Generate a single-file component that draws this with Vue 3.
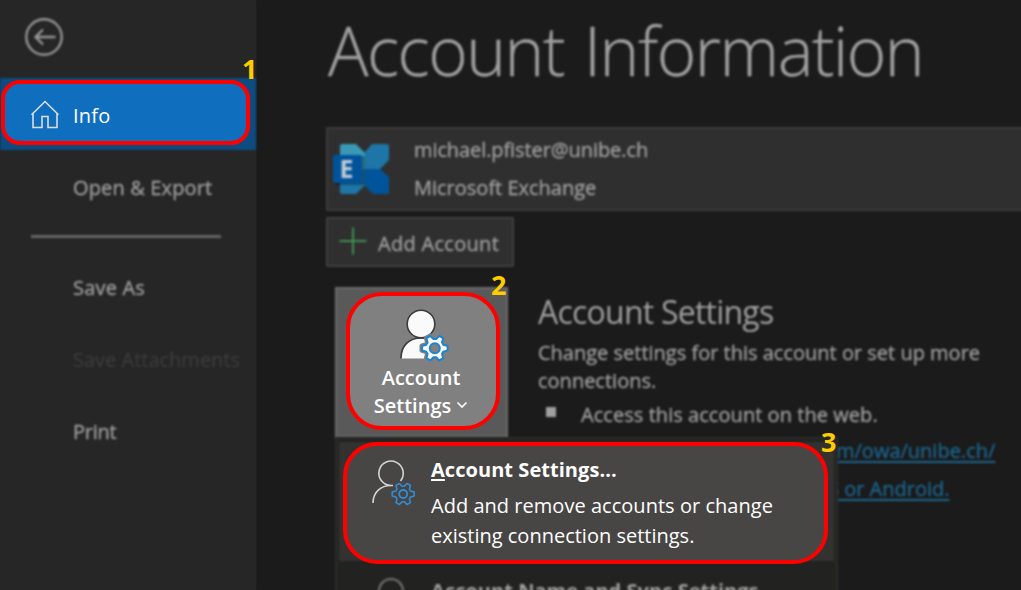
<script setup>
const navItems = [
  { label: 'Save As', cls: 'save-as' },
  { label: 'Save Attachments', cls: 'attachments' },
  { label: 'Print', cls: 'print' },
]
// Six-toothed gear outline centred on the origin.
const point = (radius, degrees) => {
  const a = (degrees * Math.PI) / 180
  return `${(radius * Math.cos(a)).toFixed(2)} ${(radius * Math.sin(a)).toFixed(2)}`
}
const gear =
  'M' +
  [0, 60, 120, 180, 240, 300]
    .flatMap((t) => [point(9.2, t - 22), point(13, t - 10), point(13, t + 10), point(9.2, t + 22)])
    .join('L') +
  'Z'
</script>

<template>
  <div class="page">
    <aside class="sidebar">
      <div class="back soft">
        <svg width="40" height="40" viewBox="0 0 40 40">
          <circle cx="20" cy="20" r="17.700" />
          <path d="M31.500 20H11.500M19 12.500L11.500 20L19 27.500" />
        </svg>
      </div>
      <div class="current soft"></div>
      <div class="nav soft"><span class="export">Open &amp; Export</span></div>
      <div class="divider soft"></div>
      <div v-for="n in navItems" :key="n.label" class="nav soft">
        <span :class="n.cls">{{ n.label }}</span>
      </div>
    </aside>

    <main class="content">
      <h1 class="soft"><span>Account Information</span></h1>
      <section class="account soft">
        <svg class="exchange" width="60" height="54" viewBox="0 0 60 54">
          <path fill="#3999b5" d="M10 2H24L34 12V27H8V4Q8 2 10 2Z" />
          <path fill="#1d76a7" d="M8 27H33V43L24 52H10Q8 52 8 50Z" />
          <path fill="#1d76a7" d="M40 2H55Q57 2 57 4V18L48 27H33V10Z" />
          <path fill="#00549b" d="M33 27H48L57 35V50Q57 52 55 52H41L33 44Z" />
          <rect x="3" y="14" width="30" height="29" fill="#000" opacity=".3" />
          <rect x="1" y="13" width="29" height="28" rx="2" fill="#00539b" />
          <text x="7.500" y="36">E</text>
        </svg>
        <div class="identity">
          <span class="mail">michael.pfister@unibe.ch</span>
          <span class="kind">Microsoft Exchange</span>
        </div>
      </section>
      <div class="add soft">
        <svg width="28" height="28" viewBox="0 0 28 28"><path d="M14 .5V27.500M.5 14H27.500" /></svg>
        <span>Add Account</span>
      </div>
      <section class="settings">
        <div class="tile soft"></div>
        <div class="about soft">
          <h2><span>Account Settings</span></h2>
          <p><span class="l1">Change settings for this account or set up more</span></p>
          <p><span class="l2">connections.</span></p>
          <div class="point"><i></i><span class="l3">Access this account on the web.</span></div>
          <div class="link link-a"><span>m/owa/unibe.ch/</span></div>
          <div class="link link-b"><span>S or Android.</span></div>
        </div>
      </section>
    </main>

    <div class="menu soft">
      <div class="hovered"></div>
      <div class="next">
        <svg width="30" height="20" viewBox="0 0 30 20"><circle cx="14" cy="14" r="12" /></svg>
        <span>Account Name and Sync Settings</span>
      </div>
    </div>

    <div class="callout c1">
      <svg width="30" height="30" viewBox="0 0 30 30">
        <path d="M1.500 14.800L15 1.500L28.500 14.800M3 13.500V27.500H12V16.500H18V27.500H27V13.500" />
      </svg>
      <span>Info</span>
    </div>
    <div class="callout c2">
      <svg class="person" width="52" height="54" viewBox="0 0 52 54">
        <path class="body" d="M2 50.500C2 37.500 10 30 22 30L30 32V50.500Z" />
        <path class="shoulder" d="M2 50.500C2 37.500 10 30 22 30H28" />
        <circle class="head" cx="22" cy="16" r="13.800" />
        <g transform="translate(35.800 40.200)">
          <path class="gap" :d="gear" />
          <path class="gear" :d="gear" />
          <circle class="hub" r="5" />
        </g>
      </svg>
      <span class="word1">Account</span>
      <div class="row">
        <span class="word2">Settings</span>
        <svg width="12" height="8" viewBox="0 0 12 8"><path d="M1.500 1.500L6 6L10.500 1.500" /></svg>
      </div>
    </div>
    <div class="callout c3">
      <svg class="person" width="46" height="48" viewBox="0 0 46 48">
        <path class="line" d="M2 43C2 32 10 25.500 20 25.500H22M29.500 21A12.200 12.200 0 1 0 20 25.500" />
        <g transform="translate(32.200 34)">
          <path class="gear" transform="scale(.86)" :d="gear" />
          <circle class="gear" r="4" />
        </g>
      </svg>
      <div class="copy">
        <strong><span><u>A</u>ccount Settings...</span></strong>
        <p><span class="d1">Add and remove accounts or change</span></p>
        <p><span class="d2">existing connection settings.</span></p>
      </div>
    </div>
    <b class="num n1">1</b>
    <b class="num n2">2</b>
    <b class="num n3">3</b>
  </div>
</template>

<style>
body { background: #1b1b1b; overflow: hidden; }
</style>

<style scoped>
* { box-sizing: border-box; margin: 0; }
svg { display: block; flex: none; overflow: visible; fill: none; }
span { white-space: nowrap; }
.page {
  position: relative; display: flex; width: 1021px; height: 590px; overflow: hidden;
  background: #1b1b1b; color: #a0a0a0; font: 20px/28px "Open Sans", "Noto Sans", sans-serif;
}
.soft { filter: blur(.9px); -webkit-text-stroke: .3px; }
.sidebar { width: 256px; flex: none; background: #262626; box-shadow: 0 0 2px #262626; }
.back { height: 78px; padding: 17px 0 0 24px; }
.back svg { stroke: #969696; stroke-width: 2.4; }
.current { height: 72px; background: #0c4c82; margin-bottom: 2px; }
.nav { height: 72px; padding-left: 73px; line-height: 72px; }
.export { letter-spacing: .15px; }
.save-as { letter-spacing: .2px; }
.print { letter-spacing: -.25px; }
.divider { height: 3px; margin: 11px 35px 14px 31px; background: #666; }
.attachments { color: #3b3b3b; }
.content { flex: 1; min-width: 0; padding-left: 70px; }
h1 {
  height: 127px; padding-left: 2px; font-size: 67.5px; font-weight: 300; line-height: 100px;
  letter-spacing: -1.5px; word-spacing: 4px; -webkit-text-stroke: .5px;
}
.account {
  display: flex; height: 84px; margin-right: -8px; padding-left: 4px;
  background: #2f2f2f; border: 2px solid #3b3b3b;
}
.exchange { margin-top: 13px; }
.exchange text { fill: #c0ccd6; font: 700 25px "Open Sans", sans-serif; }
.identity { display: flex; flex-direction: column; padding: 2px 0 0 22px; line-height: 38px; }
.mail { letter-spacing: -.09px; }
.add {
  display: flex; align-items: center; width: 188px; height: 50px; margin-top: 6px;
  padding: 0 0 0 11px; gap: 11px; background: #2f2f2f; border: 2px solid #3f3f3f;
}
.add svg { stroke: #3f8d50; stroke-width: 2; margin-top: -2px; }
.add span { letter-spacing: .3px; margin-top: 3px; }
.settings { display: flex; padding: 20px 0 0 9px; gap: 30px; }
.tile { width: 173px; height: 151px; background: #595959; border: 2px solid #6b6b6b; flex: none; }
.about { padding-top: 3px; }
h2 { height: 49px; font-size: 32px; font-weight: 400; line-height: 44px; letter-spacing: -.77px; -webkit-text-stroke: 0; }
p { height: 28px; }
.point { display: flex; align-items: center; height: 39px; }
.point i { width: 10px; height: 10px; margin: -5px 25px 0 8px; background: #a0a0a0; }
.l3 { letter-spacing: .05px; }
.link { color: #1b668f; text-decoration: underline; text-underline-offset: 3px; height: 38px; line-height: 34px; }
.link-a { padding-left: 298px; }
.link-b { padding-left: 290px; }
.menu {
  position: absolute; left: 335px; top: 437px; width: 503px; height: 170px; padding: 3px 2px;
  background: #222220; border: 2px solid #2c2c2c;
}
.hovered { height: 119px; background: #333230; }
.next { display: flex; padding: 16px 0 0 38px; font-weight: 700; -webkit-text-stroke: 0; }
.next svg { stroke: #777; stroke-width: 2; margin-right: 24px; }
.next span { letter-spacing: .03px; }
.callout { position: absolute; display: flex; border: 4px solid #f00; color: #fff; }
.c1 {
  left: 1px; top: 80px; width: 249px; height: 65px; padding: 5px 0 0 25px; gap: 13px;
  align-items: center; border-radius: 19px; background: #106ebe;
}
.c1 svg { stroke: #ddd; stroke-width: 1.6; }
.c1 span { letter-spacing: .2px; padding-top: 1px; }
.c2 {
  left: 346px; top: 292px; width: 154px; height: 138px; flex-direction: column;
  align-items: center; padding: 12px 4px 0 0; border-radius: 36px; background: #808080; font-weight: 600;
}
.c2 .person { margin: 0 0 2px 8px; }
.c2 .row { display: flex; align-items: center; gap: 6px; }
.row svg { stroke: #fff; stroke-width: 1.6; margin: -2px 0 0 -1px; }
.body { fill: #fafafa; }
.shoulder { stroke: #3a3a3a; stroke-width: 1.6; }
.head { fill: #fafafa; stroke: #3a3a3a; stroke-width: 1.6; }
.gap { fill: #808080; stroke: #808080; stroke-width: 5; stroke-linejoin: round; }
.c2 .gear { fill: #fafafa; stroke: #1d83cb; stroke-width: 2; stroke-linejoin: round; }
.hub { fill: #808080; stroke: #1d83cb; stroke-width: 2; }
.c3 {
  left: 343px; top: 442px; width: 485px; height: 122px; padding: 9px 0 0 24px;
  border-radius: 34px; background: #484644;
}
.c3 .person { margin-top: 5px; }
.line { stroke: #d4d4d4; stroke-width: 1.6; }
.c3 .gear { stroke: #2f8fd8; stroke-width: 1.8; stroke-linejoin: round; }
.copy { padding-left: 14px; }
.copy strong { display: block; height: 36px; line-height: 30px; }
.copy strong span { letter-spacing: .05px; }
.copy strong u { text-underline-offset: 2px; }
.copy p { height: 30px; line-height: 30px; }
.d1 { letter-spacing: .03px; }
.num { position: absolute; color: #fc0; font-size: 27px; line-height: 30px; }
.n1 { left: 242px; top: 54px; }
.n2 { left: 491px; top: 270px; }
.n3 { left: 821px; top: 427px; }
</style>
